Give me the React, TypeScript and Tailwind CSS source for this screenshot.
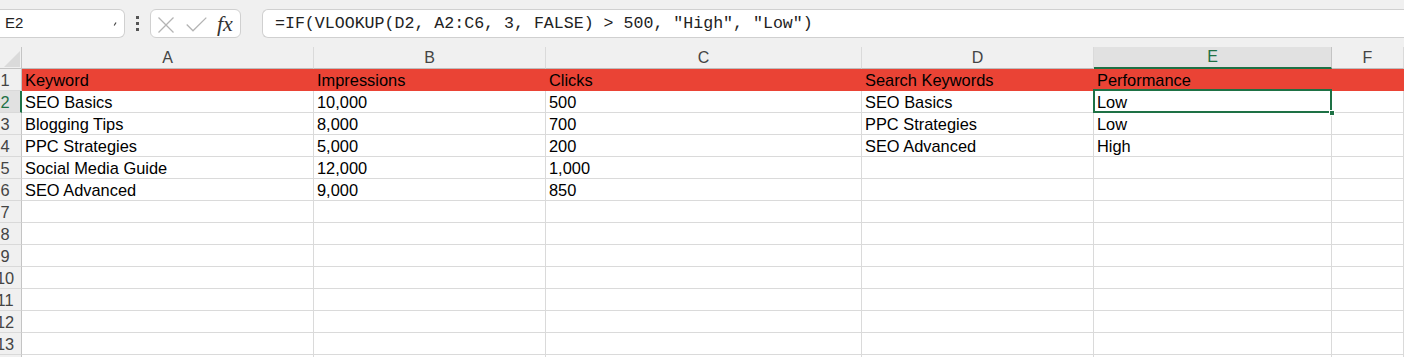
const columns = [
  { key: "A", width: "w-[292px]" },
  { key: "B", width: "w-[232px]" },
  { key: "C", width: "w-[316px]" },
  { key: "D", width: "w-[232px]" },
  { key: "E", width: "w-[238px]" },
  { key: "F", width: "flex-1" },
];

// Cell contents per row, columns A–F
const data: string[][] = [
  ["Keyword", "Impressions", "Clicks", "Search Keywords", "Performance", ""],
  ["SEO Basics", "10,000", "500", "SEO Basics", "Low", ""],
  ["Blogging Tips", "8,000", "700", "PPC Strategies", "Low", ""],
  ["PPC Strategies", "5,000", "200", "SEO Advanced", "High", ""],
  ["Social Media Guide", "12,000", "1,000", "", "", ""],
  ["SEO Advanced", "9,000", "850", "", "", ""],
];

const rowCount = 14;

function RowHeader({ n, active }: { n: number; active: boolean }) {
  return (
    <div
      className={`flex h-full w-[22px] shrink-0 overflow-hidden border-b border-[#d9d9d9] pt-[1px] leading-[21px] ${
        active
          ? "border-r-2 border-r-[#1e7145] bg-[#e1e1e1] text-[#1e7145]"
          : "border-r border-r-[#c4c4c4] bg-[#f0f0f0] text-[#444]"
      }`}
    >
      <div className="flex w-[10px] shrink-0 justify-center whitespace-nowrap">{n}</div>
    </div>
  );
}

function Toolbar() {
  return (
    <div className="flex h-[47px] items-center bg-[#f0f0f0]">
      {/* Name box */}
      <div className="flex h-[29px] w-[125px] items-center justify-between rounded-r-md border border-l-0 border-[#d0d0d0] bg-white pl-[5px] pr-[7px] text-[15px] text-[#222]">
        <span>E2</span>
        <svg width="4" height="4" viewBox="0 0 4 4">
          <path d="M3 0.5 L1.2 3.5" stroke="#444" strokeWidth="1.2" />
        </svg>
      </div>

      {/* Vertical dots */}
      <div className="ml-[11px] flex flex-col gap-[3px]">
        <span className="h-[3px] w-[3px] bg-[#555]" />
        <span className="h-[3px] w-[3px] bg-[#555]" />
        <span className="h-[3px] w-[3px] bg-[#555]" />
      </div>

      {/* Cancel / enter / fx */}
      <div className="ml-[11px] flex h-[29px] w-[91px] items-center rounded-md border border-[#d0d0d0] bg-white pl-[7px]">
        <svg width="16" height="16" viewBox="0 0 16 16" className="mt-[2px]">
          <path d="M0.5 0.5 L15.5 15.5 M15.5 0.5 L0.5 15.5" stroke="#b4b4b4" strokeWidth="1.3" fill="none" />
        </svg>
        <svg width="21" height="15" viewBox="0 0 21 15" className="ml-[12px] mt-[2px]">
          <path d="M0.7 7.5 L7 13.8 L20.3 0.6" stroke="#b4b4b4" strokeWidth="1.3" fill="none" />
        </svg>
        <span className="ml-[10px] font-['Liberation_Serif',serif] text-[22px] italic leading-none text-[#333]">
          fx
        </span>
      </div>

      {/* Formula input */}
      <div className="ml-[21px] flex h-[29px] flex-1 items-center rounded-l-md border border-r-0 border-[#d0d0d0] bg-white pl-[12px] pt-[2px] font-['Liberation_Mono',monospace] text-[16.6px] text-[#222]">
        =IF(VLOOKUP(D2, A2:C6, 3, FALSE) &gt; 500, "High", "Low")
      </div>
    </div>
  );
}

function ColumnHeaders() {
  return (
    <div className="flex h-[22px] text-[16px]">
      <div className="flex h-full w-[22px] shrink-0 items-end justify-end border-b border-r border-[#c4c4c4] bg-[#f0f0f0] pb-[1px] pr-[1px]">
        <svg width="16" height="16" viewBox="0 0 16 16">
          <path d="M16 0 L16 16 L0 16 Z" fill="#dadada" />
        </svg>
      </div>
      {columns.map((c) =>
        c.key === "E" ? (
          <div
            key={c.key}
            className={`${c.width} flex shrink-0 items-center justify-center border-b-2 border-r border-b-[#1e7145] border-r-[#c4c4c4] bg-[#e1e1e1] text-[#1e7145]`}
          >
            {c.key}
          </div>
        ) : (
          <div
            key={c.key}
            className={`${c.width} flex shrink-0 items-center justify-center border-b border-r border-b-[#bdbdbd] border-r-[#dadada] bg-[#f0f0f0] text-[#444]`}
          >
            {c.key}
          </div>
        )
      )}
    </div>
  );
}

function GridRow({ index }: { index: number }) {
  const values = data[index] ?? [];
  const isHeader = index === 0;
  return (
    <div className="flex h-[22px] text-[16.4px]">
      <RowHeader n={index + 1} active={index === 1} />
      {columns.map((c, ci) => {
        const selected = index === 1 && c.key === "E";
        return (
          <div
            key={c.key}
            className={`${c.width} relative shrink-0 whitespace-nowrap pl-[3px] pt-[1px] leading-[21px] text-black ${
              isHeader
                ? "border-b border-[#ea4335] bg-[#ea4335]"
                : "border-b border-r border-[#dadada] bg-white"
            } ${selected ? "z-10" : ""}`}
          >
            {values[ci] ?? ""}
            {selected && (
              <>
                <div className="pointer-events-none absolute -left-px -top-[2px] bottom-[-1px] right-[-1px] border-2 border-[#1e7145]" />
                <div className="absolute -bottom-[4px] -right-[4px] h-[6px] w-[6px] border border-white bg-[#1e7145]" />
              </>
            )}
          </div>
        );
      })}
    </div>
  );
}

export default function App() {
  return (
    <div className="h-[357px] w-[1404px] overflow-hidden bg-white font-['Liberation_Sans',Arial,sans-serif]">
      <Toolbar />
      <ColumnHeaders />
      {Array.from({ length: rowCount }, (_, i) => (
        <GridRow key={i} index={i} />
      ))}
    </div>
  );
}
